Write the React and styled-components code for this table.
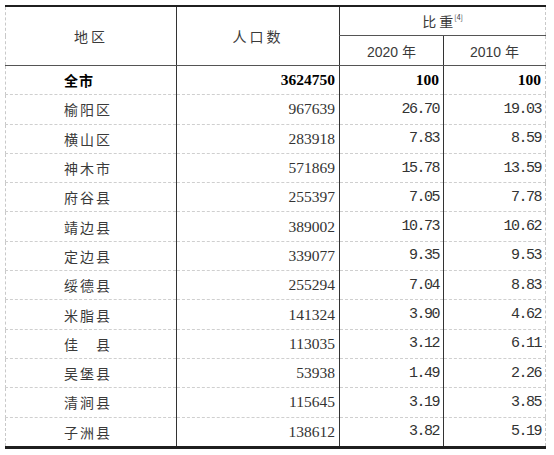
import React from "react";
import styled, { createGlobalStyle } from "styled-components";

const rows = [
  ["榆阳区", "967639", "26.70", "19.03"],
  ["横山区", "283918", "7.83", "8.59"],
  ["神木市", "571869", "15.78", "13.59"],
  ["府谷县", "255397", "7.05", "7.78"],
  ["靖边县", "389002", "10.73", "10.62"],
  ["定边县", "339077", "9.35", "9.53"],
  ["绥德县", "255294", "7.04", "8.83"],
  ["米脂县", "141324", "3.90", "4.62"],
  ["佳\u3000县", "113035", "3.12", "6.11"],
  ["吴堡县", "53938", "1.49", "2.26"],
  ["清涧县", "115645", "3.19", "3.85"],
  ["子洲县", "138612", "3.82", "5.19"],
];

export default function App() {
  return (
    <>
      <GlobalStyle />
      <Page>
        <Table>
          <colgroup>
            <col style={{ width: 171 }} />
            <col style={{ width: 163 }} />
            <col style={{ width: 104 }} />
            <col style={{ width: 102 }} />
          </colgroup>
          <thead>
            <tr>
              <HeadCell rowSpan={2}>地区</HeadCell>
              <HeadCell rowSpan={2}>人口数</HeadCell>
              <HeadCell colSpan={2} $h={28} $tight>
                比 重<Sup>[4]</Sup>
              </HeadCell>
            </tr>
            <tr>
              <HeadCell $h={29} $year>
                2020 年
              </HeadCell>
              <HeadCell $h={29} $year>
                2010 年
              </HeadCell>
            </tr>
          </thead>
          <tbody>
            <tr>
              <NameCell $bold>全市</NameCell>
              <PopCell $bold>3624750</PopCell>
              <ShareCell $bold>100</ShareCell>
              <ShareCell $bold>100</ShareCell>
            </tr>
            {rows.map((r) => (
              <tr key={r[0]}>
                <NameCell>{r[0]}</NameCell>
                <PopCell>{r[1]}</PopCell>
                <ShareCell>{r[2]}</ShareCell>
                <ShareCell>{r[3]}</ShareCell>
              </tr>
            ))}
          </tbody>
        </Table>
      </Page>
    </>
  );
}

const GlobalStyle = createGlobalStyle`
  body {
    margin: 0;
    background: #fff;
  }
`;

const Page = styled.div`
  padding: 5px 0 0 5px;
`;

const Table = styled.table`
  width: 541px;
  table-layout: fixed;
  border-collapse: collapse;
  border-top: 2px solid #1f1f1f;
  border-bottom: 3px solid #1f1f1f;
  border-left: 1px dashed #c9c9c9;
  border-right: 1px dashed #c9c9c9;
  color: #2b2b2b;

  td,
  th {
    padding: 0;
    border-left: 1px solid #333;
    border-bottom: 1px dashed #cfcfcf;
  }
  td:first-child,
  tr:first-child th:first-child {
    border-left: 1px dashed #c9c9c9;
  }
  thead th {
    border-bottom: 1px solid #555;
  }
`;

const HeadCell = styled.th`
  height: ${(p) => (p.$h ? `${p.$h}px` : "auto")};
  font-weight: normal;
  text-align: center;
  font-family: ${(p) =>
    p.$year
      ? `"Liberation Sans", "Noto Sans CJK SC", sans-serif`
      : `"Noto Sans CJK SC", sans-serif`};
  font-size: 14px;
  letter-spacing: ${(p) => (p.$year || p.$tight ? "0" : "3px")};
  color: #3a3a3a;
`;

const Sup = styled.sup`
  font-size: 7px;
  vertical-align: 7px;
  margin-left: 1px;
`;

const NameCell = styled.td`
  height: 28.3px;
  padding-left: 58px !important;
  text-align: left;
  font-family: "Noto Sans CJK SC", sans-serif;
  font-size: 14px;
  letter-spacing: ${(p) => (p.$bold ? "1px" : "2px")};
  font-weight: ${(p) => (p.$bold ? 700 : 400)};
  color: ${(p) => (p.$bold ? "#000" : "#3a3a3a")};
`;

const PopCell = styled.td`
  text-align: right;
  padding-right: 4px !important;
  font-family: "Liberation Serif", serif;
  font-size: 15.5px;
  font-weight: ${(p) => (p.$bold ? 700 : 400)};
  color: ${(p) => (p.$bold ? "#000" : "#333")};
`;

const ShareCell = styled.td`
  text-align: right;
  padding-right: 4px !important;
  font-family: ${(p) =>
    p.$bold ? `"Liberation Serif", serif` : `"Liberation Mono", monospace`};
  font-size: ${(p) => (p.$bold ? "15.5px" : "15px")};
  letter-spacing: ${(p) => (p.$bold ? "0" : "-1.5px")};
  font-weight: ${(p) => (p.$bold ? 700 : 400)};
  color: ${(p) => (p.$bold ? "#000" : "#333")};
`;
